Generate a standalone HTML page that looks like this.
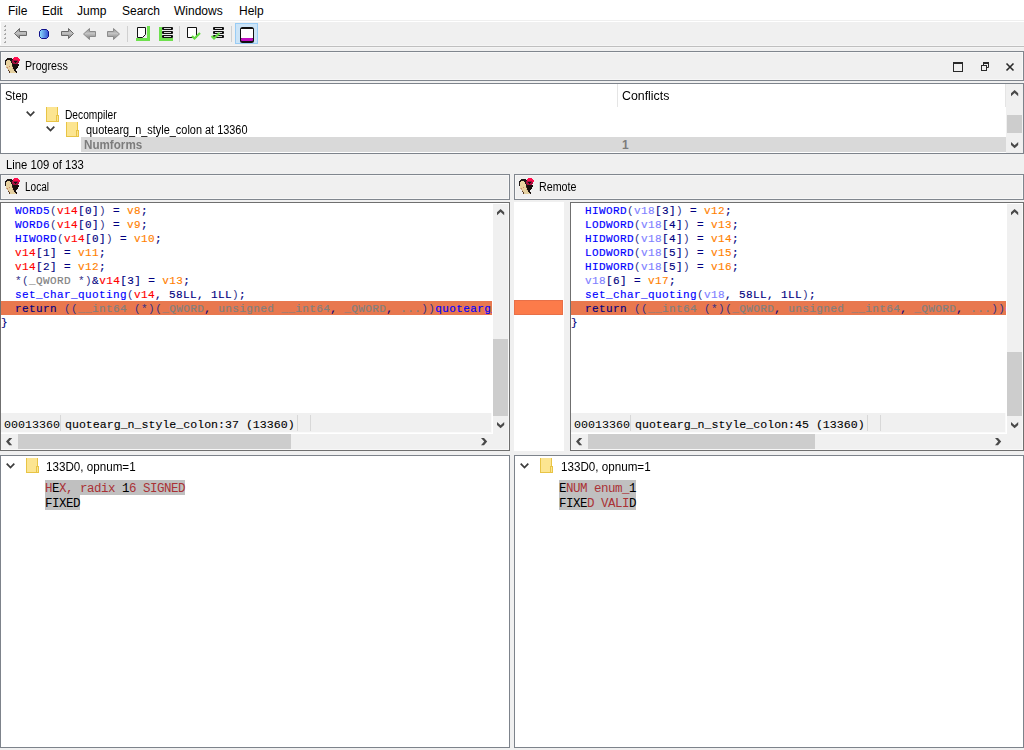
<!DOCTYPE html>
<html><head><meta charset="utf-8">
<style>
*{margin:0;padding:0;box-sizing:border-box}
html,body{width:1024px;height:750px;overflow:hidden;background:#f0f0f0;font-family:"Liberation Sans",sans-serif;font-size:12px;color:#000}
.a{position:absolute}
.t{position:absolute;white-space:pre;line-height:1;transform-origin:0 0}
.tb{position:absolute;border:1px solid #80868e;background:#f0f0f0}
.tbi{position:absolute;left:0;top:0;right:0;bottom:0;border:1px solid #f7f7f7}
.pane{position:absolute;border:1px solid #6f6f6f;background:#fff}
.bpane{position:absolute;border:1px solid #7d838b;background:#fff}
.code{position:absolute;font-family:"Liberation Mono",monospace;font-size:11px;letter-spacing:0.4px;line-height:14px;font-weight:normal;-webkit-text-stroke:0.15px}
.cl{height:14px;white-space:pre}
.pp{font-weight:normal;color:#303088;-webkit-text-stroke:0}
.sb{position:absolute;background:#f0f0f0}
.thumb{position:absolute;background:#cdcdcd}
.bm{position:absolute;font-family:"Liberation Mono",monospace;font-size:12.5px;letter-spacing:-0.5px;line-height:15px;white-space:pre;color:#aa3236}
.k{color:#000}
svg{position:absolute;overflow:visible}
</style></head><body>
<svg width="0" height="0" style="position:absolute">
<defs>
<symbol id="face" viewBox="0 0 16 17"><filter id="fb" x="-10%" y="-10%" width="120%" height="120%"><feGaussianBlur stdDeviation="0.35"/></filter><g filter="url(#fb)">
<rect x="10" y="0" width="4" height="1" fill="#ff0d4d"/><rect x="3" y="1" width="5" height="1" fill="#1c1714"/><rect x="9" y="1" width="6" height="1" fill="#ff0d4d"/><rect x="2" y="2" width="7" height="1" fill="#1c1714"/><rect x="9" y="2" width="7" height="1" fill="#ff0d4d"/><rect x="1" y="3" width="2" height="1" fill="#1c1714"/><rect x="3" y="3" width="3" height="1" fill="#e9d2a0"/><rect x="6" y="3" width="2" height="1" fill="#1c1714"/><rect x="8" y="3" width="6" height="1" fill="#a3103d"/><rect x="14" y="3" width="2" height="1" fill="#ff0d4d"/><rect x="1" y="4" width="1" height="1" fill="#1c1714"/><rect x="2" y="4" width="5" height="1" fill="#e9d2a0"/><rect x="7" y="4" width="1" height="1" fill="#1c1714"/><rect x="8" y="4" width="2" height="1" fill="#a3103d"/><rect x="10" y="4" width="3" height="1" fill="#15100e"/><rect x="13" y="4" width="2" height="1" fill="#a3103d"/><rect x="1" y="5" width="1" height="1" fill="#1c1714"/><rect x="2" y="5" width="5" height="1" fill="#e9d2a0"/><rect x="7" y="5" width="1" height="1" fill="#1c1714"/><rect x="8" y="5" width="3" height="1" fill="#a3103d"/><rect x="11" y="5" width="1" height="1" fill="#15100e"/><rect x="12" y="5" width="3" height="1" fill="#a3103d"/><rect x="1" y="6" width="1" height="1" fill="#1c1714"/><rect x="2" y="6" width="6" height="1" fill="#e9d2a0"/><rect x="8" y="6" width="1" height="1" fill="#1c1714"/><rect x="9" y="6" width="5" height="1" fill="#a3103d"/><rect x="1" y="7" width="1" height="1" fill="#1c1714"/><rect x="2" y="7" width="6" height="1" fill="#e9d2a0"/><rect x="8" y="7" width="1" height="1" fill="#1c1714"/><rect x="9" y="7" width="6" height="1" fill="#15100e"/><rect x="2" y="8" width="6" height="1" fill="#e9d2a0"/><rect x="8" y="8" width="1" height="1" fill="#1c1714"/><rect x="9" y="8" width="6" height="1" fill="#15100e"/><rect x="2" y="9" width="3" height="1" fill="#e9d2a0"/><rect x="5" y="9" width="1" height="1" fill="#cc8868"/><rect x="6" y="9" width="2" height="1" fill="#e9d2a0"/><rect x="8" y="9" width="1" height="1" fill="#5a3a28"/><rect x="9" y="9" width="5" height="1" fill="#15100e"/><rect x="2" y="10" width="1" height="1" fill="#cfb088"/><rect x="3" y="10" width="1" height="1" fill="#cc8868"/><rect x="4" y="10" width="5" height="1" fill="#e9d2a0"/><rect x="9" y="10" width="5" height="1" fill="#15100e"/><rect x="3" y="11" width="1" height="1" fill="#cfb088"/><rect x="4" y="11" width="4" height="1" fill="#e9d2a0"/><rect x="8" y="11" width="1" height="1" fill="#cfb088"/><rect x="9" y="11" width="4" height="1" fill="#15100e"/><rect x="4" y="12" width="1" height="1" fill="#cfb088"/><rect x="5" y="12" width="1" height="1" fill="#e9d2a0"/><rect x="6" y="12" width="3" height="1" fill="#e4d0a0"/><rect x="9" y="12" width="1" height="1" fill="#cfb088"/><rect x="10" y="12" width="2" height="1" fill="#15100e"/><rect x="4" y="13" width="1" height="1" fill="#5a3a28"/><rect x="5" y="13" width="5" height="1" fill="#e4d0a0"/><rect x="10" y="13" width="2" height="1" fill="#15100e"/><rect x="5" y="14" width="1" height="1" fill="#5a3a28"/><rect x="6" y="14" width="5" height="1" fill="#e4d0a0"/><rect x="11" y="14" width="2" height="1" fill="#15100e"/><rect x="5" y="15" width="1" height="1" fill="#5a3a28"/><rect x="6" y="15" width="6" height="1" fill="#e4d0a0"/><rect x="12" y="15" width="1" height="1" fill="#15100e"/>
</g></symbol>
<symbol id="fold" viewBox="0 0 13 16">
<rect x="0.5" y="0.5" width="11" height="14" fill="#fce591" stroke="#e8c445"/>
<rect x="1" y="0" width="10" height="1" fill="#fbe494"/>
<rect x="10.5" y="8.5" width="2" height="6" fill="#fce591" stroke="#e8c445"/>
</symbol>
<symbol id="chev" viewBox="0 0 10 6">
<path d="M0.7 0.7 L4.5 4.6 L8.3 0.7" fill="none" stroke="#3c3c3c" stroke-width="1.7"/>
</symbol>
</defs>
</svg>
<!-- menu -->
<div class="a" style="left:0;top:0;width:1024px;height:20px;background:#fff"></div>
<div class="t" style="left:8px;top:5px">File</div>
<div class="t" style="left:42px;top:5px">Edit</div>
<div class="t" style="left:77px;top:5px">Jump</div>
<div class="t" style="left:122px;top:5px">Search</div>
<div class="t" style="left:174px;top:5px">Windows</div>
<div class="t" style="left:239px;top:5px">Help</div>
<!-- toolbar -->
<div class="a" style="left:0;top:20px;width:1024px;height:1px;background:#efefef"></div>
<div class="a" style="left:0;top:21px;width:1024px;height:25px;background:#f0f0f0;border-left:1px solid #fff;border-top:1px solid #fff"></div>
<div class="a" style="left:0;top:45px;width:1024px;height:1px;background:#f5f5f5"></div><div class="a" style="left:0;top:46px;width:1024px;height:1px;background:#bfbfbf"></div><div class="a" style="left:0;top:47px;width:1024px;height:1px;background:#f4f4f4"></div>
<svg style="left:0;top:0" width="1024" height="50">
<defs>
<linearGradient id="gar" x1="0" y1="0" x2="0" y2="1"><stop offset="0" stop-color="#8c8c8c"/><stop offset="0.45" stop-color="#c4c4c4"/><stop offset="1" stop-color="#7a7a7a"/></linearGradient>
<linearGradient id="gball" x1="0" y1="0" x2="1" y2="0"><stop offset="0" stop-color="#90e0ff"/><stop offset="1" stop-color="#3050d0"/></linearGradient>
</defs>
<g fill="#a8a8a8">
<rect x="4" y="26" width="2" height="1"/><rect x="4" y="30" width="2" height="1"/><rect x="4" y="34" width="2" height="1"/><rect x="4" y="38" width="2" height="1"/><rect x="4" y="42" width="2" height="1"/>
<rect x="5" y="25" width="1" height="1"/><rect x="5" y="29" width="1" height="1"/><rect x="5" y="33" width="1" height="1"/><rect x="5" y="37" width="1" height="1"/><rect x="5" y="41" width="1" height="1"/>
</g>
<!-- back arrow outline -->
<path d="M14.5 33.5 L19.5 28.5 L19.5 31.5 L26.5 31.5 L26.5 35.5 L19.5 35.5 L19.5 38.5 Z" fill="url(#gar)" stroke="#6a6a6a" stroke-width="1"/>
<!-- ball -->
<path d="M41.5 29.5 L46.5 29.5 L48.5 31.5 L48.5 36.5 L46.5 38.5 L41.5 38.5 L39.5 36.5 L39.5 31.5 Z" fill="url(#gball)" stroke="#10108a" stroke-width="1"/>
<!-- fwd arrow outline -->
<path d="M73.5 33.5 L68.5 28.5 L68.5 31.5 L61.5 31.5 L61.5 35.5 L68.5 35.5 L68.5 38.5 Z" fill="url(#gar)" stroke="#6a6a6a" stroke-width="1"/>
<!-- back arrow solid -->
<path d="M83.5 34 L89.5 28.5 L89.5 31.5 L95.5 31.5 L95.5 36.5 L89.5 36.5 L89.5 39.5 Z" fill="url(#gar)" stroke="#8c8c8c" stroke-width="1"/>
<path d="M119.5 34 L113.5 28.5 L113.5 31.5 L107.5 31.5 L107.5 36.5 L113.5 36.5 L113.5 39.5 Z" fill="url(#gar)" stroke="#8c8c8c" stroke-width="1"/>
<rect x="127" y="26" width="1" height="16" fill="#d0d0d0"/>
<!-- page w green L -->
<rect x="147" y="26" width="3" height="15" fill="#6ee04e"/><rect x="136" y="38" width="14" height="3" fill="#6ee04e"/>
<path d="M137.5 27.5 L145.5 27.5 L145.5 34.5 L142.5 37.5 L137.5 37.5 Z" fill="#fff" stroke="#111" stroke-width="1"/>
<!-- stack w green L -->
<rect x="159" y="27" width="3" height="14" fill="#6ee04e"/><rect x="159" y="38" width="14" height="3" fill="#6ee04e"/>
<g fill="#111"><rect x="162" y="27" width="11" height="3" rx="1"/><rect x="162" y="31" width="11" height="3" rx="1"/><rect x="162" y="35" width="11" height="3" rx="1"/></g>
<g fill="#d8d8d8"><rect x="164" y="28" width="7" height="1"/><rect x="164" y="32" width="7" height="1"/><rect x="164" y="36" width="7" height="1"/></g>
<rect x="179" y="26" width="1" height="16" fill="#d0d0d0"/>
<!-- page w check -->
<path d="M187.5 27.5 L196.5 27.5 L196.5 37.5 L187.5 37.5 Z" fill="#fff" stroke="#111" stroke-width="1"/>
<path d="M192 36 L194.5 38.5 L200 33" fill="none" stroke="#66dd44" stroke-width="2.2"/>
<!-- stack w check -->
<g fill="#111"><rect x="213" y="27" width="11" height="3" rx="1"/><rect x="213" y="31" width="11" height="3" rx="1"/><rect x="213" y="35" width="11" height="3" rx="1"/></g>
<g fill="#d8d8d8"><rect x="215" y="28" width="7" height="1"/><rect x="215" y="32" width="7" height="1"/><rect x="215" y="36" width="7" height="1"/></g>
<path d="M211.5 36 L214 38.5 L219.5 33" fill="none" stroke="#66dd44" stroke-width="2.2"/>
<rect x="231" y="26" width="1" height="16" fill="#d0d0d0"/>
<!-- selected button -->
<rect x="235.5" y="23.5" width="22" height="20" fill="#cce4f7" stroke="#99ccf5"/>
<rect x="240" y="27" width="14" height="16" rx="2.5" fill="#111"/>
<rect x="241" y="29" width="12" height="9" fill="#fff"/>
<rect x="241" y="38" width="12" height="3" rx="1" fill="#c010c0"/>
</svg>

<!-- progress panel -->
<div class="tb" style="left:0;top:51px;width:1024px;height:30px"><div class="tbi"></div></div>
<svg style="left:4px;top:57px" width="16" height="17"><use href="#face"/></svg>
<div class="t" style="left:25px;top:60px;transform:scaleX(0.89)">Progress</div>
<svg style="left:0;top:0" width="1024" height="90">
<rect x="953.5" y="62.5" width="9" height="9" fill="none" stroke="#2a2a2a" stroke-width="1"/>
<rect x="953" y="62" width="10" height="2" fill="#2a2a2a"/>
<rect x="981.5" y="65.5" width="5" height="5" fill="none" stroke="#2a2a2a"/>
<path d="M983.5 65.5 L983.5 62.5 L988.5 62.5 L988.5 67.5 L986.5 67.5" fill="none" stroke="#2a2a2a"/>
<rect x="983" y="62" width="6" height="2" fill="#2a2a2a"/>
<path d="M1006.5 63.5 L1013.5 70.5 M1013.5 63.5 L1006.5 70.5" stroke="#2a2a2a" stroke-width="1.6"/>
</svg>
<div class="bpane" style="left:0;top:83px;width:1024px;height:71px"></div>
<div class="a" style="left:617px;top:84px;width:1px;height:23px;background:#e5e5e5"></div>
<div class="a" style="left:1005px;top:84px;width:1px;height:23px;background:#e5e5e5"></div>
<div class="t" style="left:5px;top:90px;transform:scaleX(0.92)">Step</div>
<div class="t" style="left:622px;top:90px;transform:scaleX(1.03)">Conflicts</div>
<svg style="left:26px;top:111px" width="10" height="6"><use href="#chev"/></svg>
<svg style="left:46px;top:107px" width="13" height="16"><use href="#fold"/></svg>
<div class="t" style="left:65px;top:109px;transform:scaleX(0.85)">Decompiler</div>
<svg style="left:46px;top:126px" width="10" height="6"><use href="#chev"/></svg>
<svg style="left:66px;top:122px" width="13" height="16"><use href="#fold"/></svg>
<div class="t" style="left:86px;top:124px;transform:scaleX(0.91)">quotearg_n_style_colon at 13360</div>
<div class="a" style="left:81px;top:137px;width:925px;height:15px;background:#d9d9d9"></div>
<div class="t" style="left:84px;top:139px;font-weight:bold;color:#7c7c7c;transform:scaleX(0.97)">Numforms</div>
<div class="t" style="left:622px;top:139px;font-weight:bold;color:#7c7c7c">1</div>
<div class="sb" style="left:1006px;top:84px;width:17px;height:69px"></div>
<div class="thumb" style="left:1007px;top:115px;width:15px;height:18px"></div>
<svg style="left:1011px;top:90px" width="8" height="7"><polygon points="0,6.2 3.6,3 7.2,6.2 7.2,3.2 3.6,0 0,3.2" fill="#4a4a4a"/></svg>
<svg style="left:1011px;top:142px" width="8" height="7"><polygon points="0,0 3.6,3.2 7.2,0 7.2,3 3.6,6.2 0,3" fill="#4a4a4a"/></svg>

<div class="t" style="left:6px;top:159px;transform:scaleX(0.94)">Line 109 of 133</div>

<!-- local title -->
<div class="tb" style="left:0;top:174px;width:510px;height:26px"><div class="tbi"></div></div>
<svg style="left:4px;top:178px" width="16" height="17"><use href="#face"/></svg>
<div class="t" style="left:25px;top:181px;transform:scaleX(0.84)">Local</div>
<!-- remote title -->
<div class="tb" style="left:514px;top:174px;width:510px;height:26px"><div class="tbi"></div></div>
<svg style="left:518px;top:178px" width="16" height="17"><use href="#face"/></svg>
<div class="t" style="left:539px;top:181px;transform:scaleX(0.89)">Remote</div>

<!-- local code -->
<div class="pane" style="left:0;top:202px;width:510px;height:249px;overflow:hidden;box-shadow:inset -1px -1px 0 #f8f8f8">
<div class="a" style="left:0;top:98px;width:491px;height:14px;background:#e8784f"></div>
<div class="code" style="left:0;top:1px;width:491px;height:200px;overflow:hidden"><div class="cl"><span style="color:#0000ff">  WORD5</span><span style="color:#000080"><b class="pp">(</b></span><span style="color:#ff0000">v14</span><span style="color:#000080">[0]</span><span style="color:#000080"><b class="pp">)</b></span><span style="color:#000080"> = </span><span style="color:#ff8000">v8</span><span style="color:#000080">;</span></div>
<div class="cl"><span style="color:#0000ff">  WORD6</span><span style="color:#000080"><b class="pp">(</b></span><span style="color:#ff0000">v14</span><span style="color:#000080">[0]</span><span style="color:#000080"><b class="pp">)</b></span><span style="color:#000080"> = </span><span style="color:#ff8000">v9</span><span style="color:#000080">;</span></div>
<div class="cl"><span style="color:#0000ff">  HIWORD</span><span style="color:#000080"><b class="pp">(</b></span><span style="color:#ff0000">v14</span><span style="color:#000080">[0]</span><span style="color:#000080"><b class="pp">)</b></span><span style="color:#000080"> = </span><span style="color:#ff8000">v10</span><span style="color:#000080">;</span></div>
<div class="cl"><span style="color:#ff0000">  v14</span><span style="color:#000080">[1] = </span><span style="color:#ff8000">v11</span><span style="color:#000080">;</span></div>
<div class="cl"><span style="color:#ff0000">  v14</span><span style="color:#000080">[2] = </span><span style="color:#ff8000">v12</span><span style="color:#000080">;</span></div>
<div class="cl"><span style="color:#000080">  <b class="pp">*</b><b class="pp">(</b></span><span style="color:#808080">_QWORD</span><span style="color:#000080"> <b class="pp">*</b><b class="pp">)</b>&amp;</span><span style="color:#ff0000">v14</span><span style="color:#000080">[3] = </span><span style="color:#ff8000">v13</span><span style="color:#000080">;</span></div>
<div class="cl"><span style="color:#0000ff">  set_char_quoting</span><span style="color:#000080"><b class="pp">(</b></span><span style="color:#ff0000">v14</span><span style="color:#000080">, 58LL, 1LL<b class="pp">)</b>;</span></div>
<div class="cl"><span style="color:#000080">  return <b class="pp">(</b><b class="pp">(</b></span><span style="color:#808080">__int64</span><span style="color:#000080"> <b class="pp">(</b><b class="pp">*</b><b class="pp">)</b><b class="pp">(</b></span><span style="color:#808080">_QWORD</span><span style="color:#000080">, </span><span style="color:#808080">unsigned __int64</span><span style="color:#000080">, </span><span style="color:#808080">_QWORD</span><span style="color:#000080">, </span><span style="color:#808080">...</span><span style="color:#000080"><b class="pp">)</b><b class="pp">)</b></span><span style="color:#0000ff">quotearg_n_style_colon</span></div>
<div class="cl"><span style="color:#000080">}</span></div></div>
<div class="sb" style="left:492px;top:1px;width:15px;height:245px"></div>
<div class="thumb" style="left:492px;top:136px;width:15px;height:77px"></div>
<div class="sb" style="left:0;top:210px;width:491px;height:20px;border-right:1px solid #fafafa;border-bottom:1px solid #fafafa"></div>
<div class="a" style="left:3px;top:215px;font-family:'Liberation Mono',monospace;font-size:11.67px;line-height:14px;white-space:pre">00013360</div>
<div class="a" style="left:64px;top:215px;font-family:'Liberation Mono',monospace;font-size:11.6px;line-height:14px;white-space:pre;-webkit-text-stroke:0.1px">quotearg_n_style_colon:37 (13360)</div>
<div class="a" style="left:59px;top:212px;width:1px;height:16px;background:#d8d8d8"></div>
<div class="a" style="left:296px;top:212px;width:1px;height:16px;background:#d8d8d8"></div>
<div class="a" style="left:309px;top:212px;width:1px;height:16px;background:#d8d8d8"></div>
<div class="sb" style="left:0;top:231px;width:507px;height:15px"></div>
<div class="thumb" style="left:17px;top:231px;width:273px;height:15px"></div>
<svg style="left:496px;top:6px" width="8" height="7"><polygon points="0,6.2 3.6,3 7.2,6.2 7.2,3.2 3.6,0 0,3.2" fill="#4a4a4a"/></svg>
<svg style="left:496px;top:219px" width="8" height="7"><polygon points="0,0 3.6,3.2 7.2,0 7.2,3 3.6,6.2 0,3" fill="#4a4a4a"/></svg>
<svg style="left:5px;top:235px" width="7" height="8"><polygon points="6.2,0 3,3.6 6.2,7.2 3.2,7.2 0,3.6 3.2,0" fill="#4a4a4a"/></svg>
<svg style="left:480px;top:235px" width="7" height="8"><polygon points="0,0 3.2,3.6 0,7.2 3,7.2 6.2,3.6 3,0" fill="#4a4a4a"/></svg>
</div>
<!-- remote gutter -->
<div class="a" style="left:514px;top:202px;width:50px;height:249px;background:#fff"></div>
<div class="a" style="left:514px;top:300px;width:49px;height:15px;background:#fc7b4a;border:1px solid #e87048"></div>
<div class="pane" style="left:570px;top:202px;width:454px;height:249px;overflow:hidden;box-shadow:inset -1px -1px 0 #f8f8f8">
<div class="a" style="left:0;top:98px;width:435px;height:14px;background:#e8784f"></div>
<div class="code" style="left:0;top:1px;width:435px;height:200px;overflow:hidden"><div class="cl"><span style="color:#0000ff">  HIWORD</span><span style="color:#000080"><b class="pp">(</b></span><span style="color:#8080ff">v18</span><span style="color:#000080">[3]</span><span style="color:#000080"><b class="pp">)</b></span><span style="color:#000080"> = </span><span style="color:#ff8000">v12</span><span style="color:#000080">;</span></div>
<div class="cl"><span style="color:#0000ff">  LODWORD</span><span style="color:#000080"><b class="pp">(</b></span><span style="color:#8080ff">v18</span><span style="color:#000080">[4]</span><span style="color:#000080"><b class="pp">)</b></span><span style="color:#000080"> = </span><span style="color:#ff8000">v13</span><span style="color:#000080">;</span></div>
<div class="cl"><span style="color:#0000ff">  HIDWORD</span><span style="color:#000080"><b class="pp">(</b></span><span style="color:#8080ff">v18</span><span style="color:#000080">[4]</span><span style="color:#000080"><b class="pp">)</b></span><span style="color:#000080"> = </span><span style="color:#ff8000">v14</span><span style="color:#000080">;</span></div>
<div class="cl"><span style="color:#0000ff">  LODWORD</span><span style="color:#000080"><b class="pp">(</b></span><span style="color:#8080ff">v18</span><span style="color:#000080">[5]</span><span style="color:#000080"><b class="pp">)</b></span><span style="color:#000080"> = </span><span style="color:#ff8000">v15</span><span style="color:#000080">;</span></div>
<div class="cl"><span style="color:#0000ff">  HIDWORD</span><span style="color:#000080"><b class="pp">(</b></span><span style="color:#8080ff">v18</span><span style="color:#000080">[5]</span><span style="color:#000080"><b class="pp">)</b></span><span style="color:#000080"> = </span><span style="color:#ff8000">v16</span><span style="color:#000080">;</span></div>
<div class="cl"><span style="color:#8080ff">  v18</span><span style="color:#000080">[6] = </span><span style="color:#ff8000">v17</span><span style="color:#000080">;</span></div>
<div class="cl"><span style="color:#0000ff">  set_char_quoting</span><span style="color:#000080"><b class="pp">(</b></span><span style="color:#8080ff">v18</span><span style="color:#000080">, 58LL, 1LL<b class="pp">)</b>;</span></div>
<div class="cl"><span style="color:#000080">  return <b class="pp">(</b><b class="pp">(</b></span><span style="color:#808080">__int64</span><span style="color:#000080"> <b class="pp">(</b><b class="pp">*</b><b class="pp">)</b><b class="pp">(</b></span><span style="color:#808080">_QWORD</span><span style="color:#000080">, </span><span style="color:#808080">unsigned __int64</span><span style="color:#000080">, </span><span style="color:#808080">_QWORD</span><span style="color:#000080">, </span><span style="color:#808080">...</span><span style="color:#000080"><b class="pp">)</b><b class="pp">)</b></span><span style="color:#0000ff">quotearg_n_style_colon</span></div>
<div class="cl"><span style="color:#000080">}</span></div></div>
<div class="sb" style="left:436px;top:1px;width:15px;height:245px"></div>
<div class="thumb" style="left:436px;top:149px;width:15px;height:64px"></div>
<div class="sb" style="left:0;top:210px;width:435px;height:20px;border-right:1px solid #fafafa;border-bottom:1px solid #fafafa"></div>
<div class="a" style="left:3px;top:215px;font-family:'Liberation Mono',monospace;font-size:11.67px;line-height:14px;white-space:pre">00013360</div>
<div class="a" style="left:64px;top:215px;font-family:'Liberation Mono',monospace;font-size:11.6px;line-height:14px;white-space:pre;-webkit-text-stroke:0.1px">quotearg_n_style_colon:45 (13360)</div>
<div class="a" style="left:59px;top:212px;width:1px;height:16px;background:#d8d8d8"></div>
<div class="a" style="left:296px;top:212px;width:1px;height:16px;background:#d8d8d8"></div>
<div class="a" style="left:309px;top:212px;width:1px;height:16px;background:#d8d8d8"></div>
<div class="sb" style="left:0;top:231px;width:451px;height:15px"></div>
<div class="thumb" style="left:17px;top:231px;width:227px;height:15px"></div>
<svg style="left:440px;top:6px" width="8" height="7"><polygon points="0,6.2 3.6,3 7.2,6.2 7.2,3.2 3.6,0 0,3.2" fill="#4a4a4a"/></svg>
<svg style="left:440px;top:219px" width="8" height="7"><polygon points="0,0 3.6,3.2 7.2,0 7.2,3 3.6,6.2 0,3" fill="#4a4a4a"/></svg>
<svg style="left:5px;top:235px" width="7" height="8"><polygon points="6.2,0 3,3.6 6.2,7.2 3.2,7.2 0,3.6 3.2,0" fill="#4a4a4a"/></svg>
<svg style="left:424px;top:235px" width="7" height="8"><polygon points="0,0 3.2,3.6 0,7.2 3,7.2 6.2,3.6 3,0" fill="#4a4a4a"/></svg>
</div>

<!-- bottom panes -->
<div class="bpane" style="left:0;top:455px;width:510px;height:293px"></div>
<div class="bpane" style="left:514px;top:455px;width:510px;height:293px"></div>
<svg style="left:6px;top:463px" width="10" height="6"><use href="#chev"/></svg>
<svg style="left:26px;top:458px" width="13" height="16"><use href="#fold"/></svg>
<div class="t" style="left:46px;top:461px;transform:scaleX(0.97)">133D0, opnum=1</div>
<div class="a" style="left:45px;top:480px;width:140px;height:15px;background:#c0c0c0"></div>
<div class="a" style="left:45px;top:495px;width:35px;height:15px;background:#c0c0c0"></div>
<div class="bm" style="left:45px;top:482px">H<span class="k">E</span>X, radix <span class="k">1</span>6 SIGNED
<span class="k">FIXED</span></div>
<svg style="left:520px;top:463px" width="10" height="6"><use href="#chev"/></svg>
<svg style="left:540px;top:458px" width="13" height="16"><use href="#fold"/></svg>
<div class="t" style="left:561px;top:461px;transform:scaleX(0.97)">133D0, opnum=1</div>
<div class="a" style="left:559px;top:480px;width:77px;height:30px;background:#c0c0c0"></div>
<div class="bm" style="left:559px;top:482px"><span class="k">E</span>NUM enum_<span class="k">1</span>
<span class="k">FIXE</span>D VALI<span class="k">D</span></div>

</body></html>
